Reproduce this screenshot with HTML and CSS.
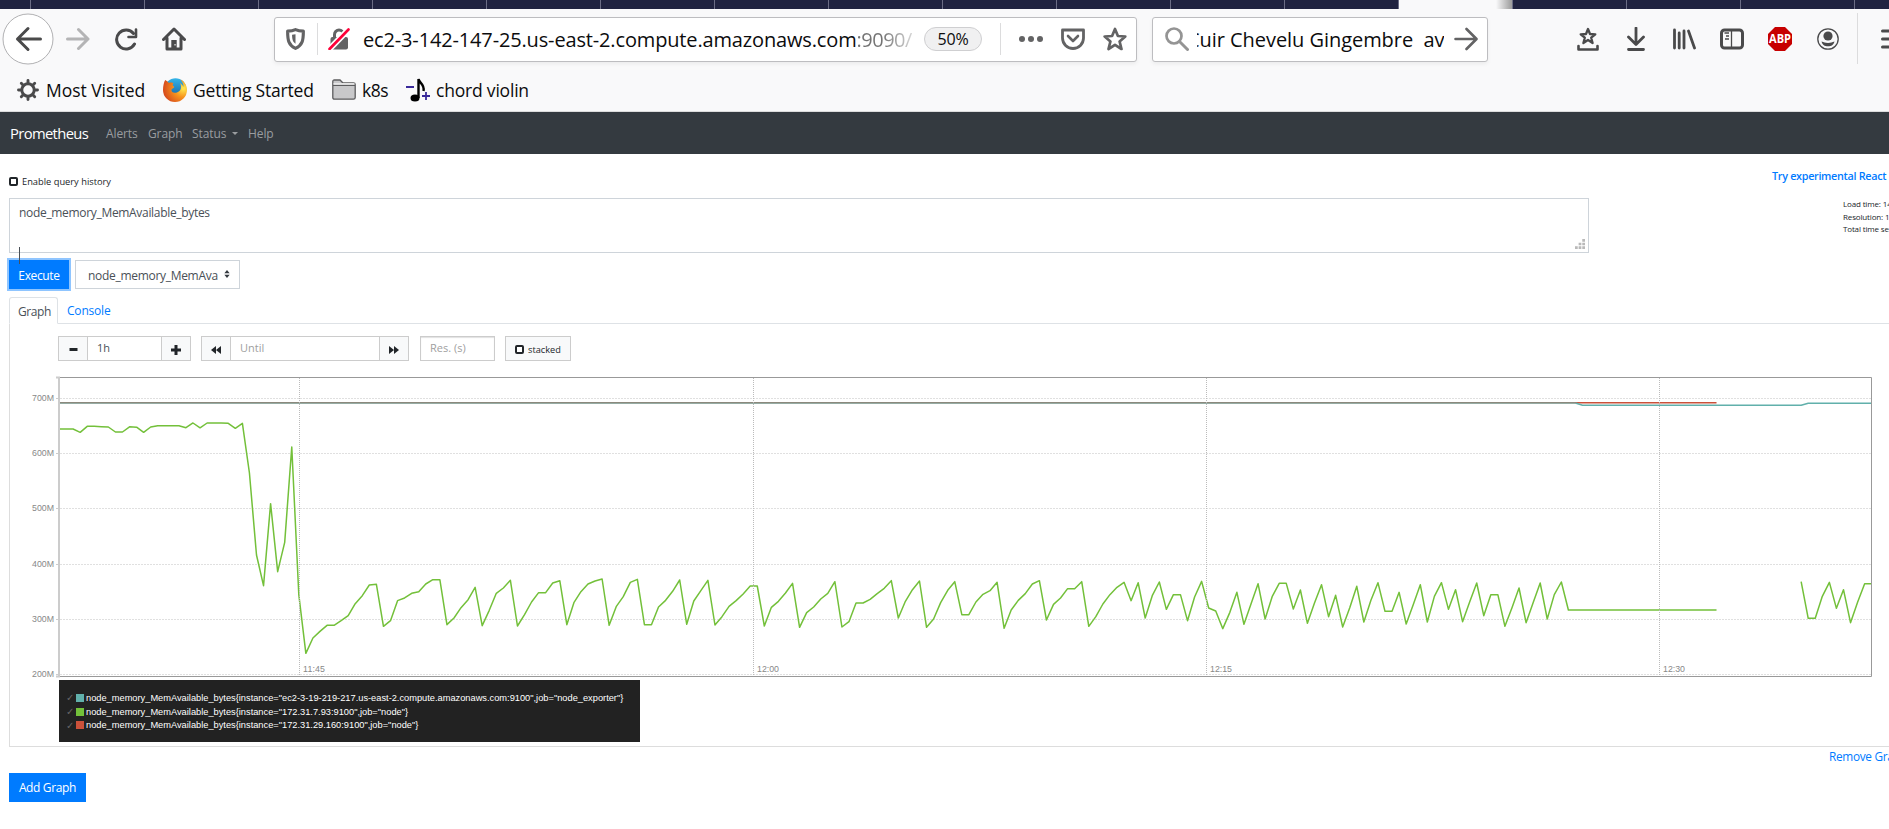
FILE: index.html
```html
<!DOCTYPE html>
<html lang="en">
<head>
<meta charset="utf-8">
<title>Prometheus Time Series Collection and Processing Server</title>
<link rel="stylesheet" href="styles.css">
</head>
<body>
<div class="tabstrip"><div class="tab-active"></div></div>

<div class="toolbar">
  <svg class="ico back" viewBox="0 0 52 52"><circle cx="26" cy="26" r="25" fill="#fff" stroke="#b1b1b3"/><path d="M38.500 26H15.500M26 15.500L15.500 26L26 36.500" fill="none" stroke="#4a4a4b" stroke-width="3" stroke-linecap="round" stroke-linejoin="round"/></svg>
  <svg class="ico fwd" viewBox="0 0 24 24"><path d="M1.500 12H22M12.500 2.500L22 12L12.500 21.500" fill="none" stroke="#b4b4b5" stroke-width="3" stroke-linecap="round" stroke-linejoin="round"/></svg>
  <svg class="ico reload" viewBox="0 0 24 24"><path d="M20.500 17A9.500 9.500 0 1 1 19.500 6.500" fill="none" stroke="#4a4a4b" stroke-width="3" stroke-linecap="round"/><path d="M22 2.500V10H14.500" fill="none" stroke="#4a4a4b" stroke-width="2.600" stroke-linecap="round" stroke-linejoin="round"/></svg>
  <svg class="ico home" viewBox="0 0 24 24"><path d="M1.500 12.500L12 2L22.500 12.500M5 11V22H19V11" fill="none" stroke="#4a4a4b" stroke-width="3" stroke-linecap="round" stroke-linejoin="round"/><path d="M9.300 22V13H14.700V22Z" fill="#4a4a4b"/><rect x="12.300" y="17" width="1.500" height="1.500" fill="#ccc"/></svg>

  <div class="urlbar">
    <svg class="ico shield" viewBox="0 0 18 21"><path d="M9 1.500C11.500 2.700 14 3 16.500 3C16.500 12 15.500 16.500 9 19.500C2.500 16.500 1.500 12 1.500 3C4 3 6.500 2.700 9 1.500Z" fill="none" stroke="#636364" stroke-width="3" stroke-linejoin="round"/><path d="M9 6V15C6.500 13.500 5.800 11 5.700 6.500Z" fill="#636364"/></svg>
    <span class="bar-divider d1"></span>
    <svg class="ico lock" viewBox="0 0 22 22"><path d="M6.500 10V6.500A4.500 4.500 0 0 1 15.500 6.500V10" fill="none" stroke="#636364" stroke-width="3"/><rect x="2.500" y="9" width="17.500" height="12.500" rx="2" fill="#636364"/><path d="M1.500 21L20.500 1.500" stroke="#fff" stroke-width="6"/><path d="M1.500 21L20.500 1.500" stroke="#ff0039" stroke-width="2.600" stroke-linecap="round"/></svg>
    <span class="url">ec2-3-142-147-25.us-east-2.compute.amazonaws.com<span class="port">:9090/</span></span>
    <span class="zoom">50%</span>
    <span class="bar-divider d2"></span>
    <svg class="ico dots" viewBox="0 0 24 24"><g fill="#636364"><circle cx="3" cy="12" r="3"/><circle cx="12" cy="12" r="3"/><circle cx="21" cy="12" r="3"/></g></svg>
    <svg class="ico pocket" viewBox="0 0 24 24"><path d="M1.500 3H22.500V11A10.500 10.500 0 0 1 1.500 11Z" fill="none" stroke="#636364" stroke-width="2.800" stroke-linejoin="round"/><path d="M7 9L12 14L17 9" fill="none" stroke="#636364" stroke-width="2.600" stroke-linecap="round" stroke-linejoin="round"/></svg>
    <svg class="ico star" viewBox="0 0 24 24"><path d="M12 2L14.900 9L22.300 9.500L16.600 14.500L18.500 22L12 17.900L5.500 22L7.400 14.500L1.700 9.500L9.100 9Z" fill="none" stroke="#636364" stroke-width="2.700" stroke-linejoin="round"/></svg>
  </div>

  <div class="searchbar">
    <svg class="ico mag" viewBox="0 0 24 24"><circle cx="9" cy="9" r="7.500" fill="none" stroke="#949494" stroke-width="2.700"/><path d="M14.500 14.500L22.500 22.500" stroke="#949494" stroke-width="3" stroke-linecap="round"/></svg>
    <span class="search-clip"><span class="search-text">Cuir Chevelu Gingembre&nbsp; avis</span></span>
    <svg class="ico go" viewBox="0 0 24 24"><path d="M1.500 12H22M12.500 2L22.500 12L12.500 22" fill="none" stroke="#636364" stroke-width="2.600" stroke-linecap="round" stroke-linejoin="round"/></svg>
  </div>

  <svg class="ico tb first" viewBox="0 0 24 24"><path d="M12 2L14 7L19.300 7.300L15.200 10.700L16.600 16L12 13L7.400 16L8.800 10.700L4.700 7.300L10 7Z" fill="none" stroke="#4a4a4b" stroke-width="2.300" stroke-linejoin="round"/><path d="M2.500 19V22.500H21.500V19" fill="none" stroke="#4a4a4b" stroke-width="2.600" stroke-linecap="round" stroke-linejoin="round"/></svg>
  <svg class="ico tb" viewBox="0 0 24 24"><path d="M12 1V17M4.500 10L12 17.500L19.500 10M4.500 22.500H19.500" fill="none" stroke="#4a4a4b" stroke-width="2.800" stroke-linecap="round" stroke-linejoin="round"/></svg>
  <svg class="ico tb" viewBox="0 0 24 24"><path d="M2.500 3V21M7.200 6V21M12 4V21" fill="none" stroke="#4a4a4b" stroke-width="2.800" stroke-linecap="round"/><path d="M16.500 4L22.500 21" stroke="#4a4a4b" stroke-width="2.800" stroke-linecap="round"/></svg>
  <svg class="ico tb" viewBox="0 0 24 24"><rect x="1.500" y="3" width="21" height="18" rx="3" fill="none" stroke="#4a4a4b" stroke-width="3"/><path d="M11.500 3V21" stroke="#4a4a4b" stroke-width="1.300"/><path d="M4.500 6H9M6 9H9M5 12H9" stroke="#4a4a4b" stroke-width="1.300"/></svg>
  <svg class="ico tb" viewBox="0 0 24 24"><path d="M7 0H17L24 7V17L17 24H7L0 17V7Z" fill="#c70000"/><text x="12" y="16.300" text-anchor="middle" textLength="22" lengthAdjust="spacingAndGlyphs" class="abp">ABP</text></svg>
  <svg class="ico tb" viewBox="0 0 24 24"><circle cx="12" cy="12" r="10.200" fill="none" stroke="#4a4a4b" stroke-width="1.300"/><circle cx="12" cy="9" r="4.600" fill="#4a4a4b"/><path d="M5.500 14.500C8 15 9 16 12 16S16 15 18.500 14.500C17.500 18 15.500 19.300 12 19.300S6.500 18 5.500 14.500Z" fill="#4a4a4b"/></svg>
  <span class="tb-divider"></span>
  <svg class="ico burger" viewBox="0 0 24 24"><path d="M1.500 4H22.500M1.500 12H22.500M1.500 20H22.500" stroke="#4a4a4b" stroke-width="3" stroke-linecap="round"/></svg>
</div>

<div class="bookmarks">
  <svg class="ico gear" viewBox="0 0 22 22"><circle cx="11" cy="11" r="6.200" fill="none" stroke="#4a4a4b" stroke-width="2.900"/><path d="M11 1.500V4M11 18V20.500M1.500 11H4M18 11H20.500M4.300 4.300L6 6M16 16L17.700 17.700M17.700 4.300L16 6M6 16L4.300 17.700" stroke="#4a4a4b" stroke-width="2.900" stroke-linecap="round"/></svg>
  <span class="bm b1">Most Visited</span>
  <svg class="ico fox" viewBox="0 0 24 24"><defs><radialGradient id="g" cx=".85" cy=".4" r=".95"><stop offset=".05" stop-color="#ffe14a"/><stop offset=".4" stop-color="#f7941e"/><stop offset="1" stop-color="#cf3a1c"/></radialGradient><linearGradient id="b" x2="0" y2="1"><stop offset="0" stop-color="#35b5e8"/><stop offset="1" stop-color="#14589c"/></linearGradient></defs><circle cx="12.500" cy="11" r="10.800" fill="url(#b)"/><path d="M2.200 2C4 3 5 4 6 5C8 4 10 5 10.500 5.500C9.500 6.500 9 7.500 11 8.500C12 9.500 9 10.500 8.500 11.500C8 14 10.500 15.500 14 14.500C18 13 19 9 17 5C19 6 20 8 20.500 9C20.700 6 19 3 17.500 1.500C22 3.500 24 8 24 12A12 12 0 0 1 0 12C0 8 1 4 2.200 2Z" fill="url(#g)"/></svg>
  <span class="bm b2">Getting Started</span>
  <svg class="ico folder" viewBox="0 0 24 21"><path d="M.8 18.500V2.500Q.8 1 2.300 1H8L11 4H21.500Q23.200 4 23.200 5.500V18.500Q23.200 20.200 21.500 20.200H2.500Q.8 20.200 .8 18.500Z" fill="#c8c8ca" stroke="#5c5c5e" stroke-width="1.300"/><path d="M1 6.500H23" stroke="#5c5c5e"/><path d="M1.500 4.800H22.500" stroke="#e8e8e8" stroke-width="1.500"/></svg>
  <span class="bm b3">k8s</span>
  <svg class="ico note" viewBox="0 0 24 24"><path d="M0 9H8M16 18H24M20 14V22" stroke="#3a2a9a" stroke-width="1.800"/><ellipse cx="9" cy="20" rx="4.500" ry="3.500"/><path d="M12.500 20V1C13 5 19 6 17.500 13" fill="none" stroke="#000" stroke-width="2.400"/></svg>
  <span class="bm b4">chord violin</span>
</div>

<nav class="navbar">
  <span class="brand">Prometheus</span>
  <span class="nl n1">Alerts</span>
  <span class="nl n2">Graph</span>
  <span class="nl n3">Status<i class="caret"></i></span>
  <span class="nl n4">Help</span>
</nav>

<main class="page">
  <div class="topline">
    <span class="box"></span><span class="hist">Enable query history</span>
    <span class="react">Try experimental React UI</span>
  </div>
  <div class="queryrow">
    <div class="textarea"><span class="query">node_memory_MemAvailable_bytes</span><i class="cursor"></i>
      <svg class="grip" viewBox="0 0 11 11"><path d="M8 0h3v3h-3zM4 4h3v3h-3zM8 4h3v3h-3zM0 8h3v3h-3zM4 8h3v3h-3zM8 8h3v3h-3z" fill="#b9b9b9"/></svg>
    </div>
    <div class="stats"><div>Load time: 14ms</div><div>Resolution: 14s</div><div>Total time series: 3</div></div>
  </div>
  <div class="execrow">
    <div class="btn exec">Execute</div>
    <div class="select"><span>node_memory_MemAva</span><svg class="updown" viewBox="0 0 6 9"><path d="M0 3.700L3 0L6 3.700ZM0 5.300L3 9L6 5.300Z" fill="#343a40"/></svg></div>
  </div>
  <div class="tabs"><div class="tab on">Graph</div><div class="tab off">Console</div></div>
  <section class="panel">
    <div class="controls">
      <div class="group">
        <div class="cb side"><svg width="9" height="9" viewBox="0 0 9 9"><path d="M.5 4.500h8" stroke="#212529" stroke-width="3"/></svg></div>
        <div class="inp dur">1h</div>
        <div class="cb side"><svg width="10" height="10" viewBox="0 0 10 10"><path d="M0 5h10M5 0v10" stroke="#212529" stroke-width="3"/></svg></div>
      </div>
      <div class="group">
        <div class="cb side"><svg width="10" height="8" viewBox="0 0 10 8"><path d="M5 0V8L0 4ZM10 0V8L5 4Z" fill="#212529"/></svg></div>
        <div class="inp until ph">Until</div>
        <div class="cb side"><svg width="10" height="8" viewBox="0 0 10 8"><path d="M0 0V8L5 4ZM5 0V8L10 4Z" fill="#212529"/></svg></div>
      </div>
      <div class="group late"><div class="inp res ph">Res. (s)</div></div>
      <div class="group"><div class="cb stack"><span class="box"></span><span>stacked</span></div></div>
    </div>
    <svg id="chart" class="chart" width="1860" height="312" viewBox="20 370 1860 312"></svg>
    <div class="legend">
      <div class="lrow"><span class="chk">✓</span><i class="sw teal"></i><span class="lt">node_memory_MemAvailable_bytes{instance="ec2-3-19-219-217.us-east-2.compute.amazonaws.com:9100",job="node_exporter"}</span></div>
      <div class="lrow"><span class="chk">✓</span><i class="sw green"></i><span class="lt">node_memory_MemAvailable_bytes{instance="172.31.7.93:9100",job="node"}</span></div>
      <div class="lrow"><span class="chk">✓</span><i class="sw red"></i><span class="lt">node_memory_MemAvailable_bytes{instance="172.31.29.160:9100",job="node"}</span></div>
    </div>
  </section>
  <div class="remove">Remove Graph</div>
  <div class="btn add">Add Graph</div>
</main>
<script src="chart.js"></script>
</body>
</html>
```
FILE: styles.css
```css
* { box-sizing: border-box; }
body { margin: 0; width: 1889px; height: 829px; overflow: hidden; background: #fff; font-family: "Open Sans", "Noto Sans", sans-serif; color: #212529; white-space: nowrap; }
svg { display: block; flex: none; }
span, div, i { flex: none; }

.tabstrip { height: 9px; display: flex; padding-left: 1399px; background: #202340 linear-gradient(90deg, #6b6d85 1px, #202340 1px) 30px 0 / 114px 9px; }
.tab-active { width: 113px; height: 9px; background: linear-gradient(90deg, #f9f9fa 97px, #a0a0a0 112px); }

.toolbar { height: 56px; background: #f9f9fa; display: flex; align-items: center; padding-left: 2px; }
.toolbar .ico { width: 24px; height: 24px; }
.toolbar .back { width: 52px; height: 52px; margin-top: 3px; }
.toolbar .fwd { margin: 4px 0 0 12px; }
.toolbar .reload { margin: 4px 0 0 24px; }
.toolbar .home { margin: 4px 0 0 24px; }
.urlbar, .searchbar { height: 45px; margin-top: 4px; background: #fff; border: 1px solid #bdbdc0; border-radius: 3px; display: flex; align-items: center; box-shadow: 0 2px 4px rgba(0,0,0,.06); }
.urlbar { width: 863px; margin-left: 88px; padding-left: 11px; }
.toolbar .shield { width: 19px; height: 22px; }
.bar-divider { width: 1px; height: 32px; background: #dcdcdd; }
.d1 { margin-left: 12px; }
.toolbar .lock { width: 22px; height: 22px; margin-left: 10px; }
.url { margin-left: 13px; width: 556px; overflow: hidden; font-size: 20px; letter-spacing: -.15px; line-height: 30px; padding-top: 1px; color: #0c0c0d; }
.port { letter-spacing: -.5px; background: linear-gradient(90deg, #737373 25px, #d8d8d8 56px); -webkit-background-clip: text; background-clip: text; color: transparent; }
.zoom { width: 58px; height: 24px; margin-left: 5px; border: 1px solid #cfcfd1; border-radius: 12px; background: #f0f0f1; text-align: center; font-size: 16px; letter-spacing: -.2px; line-height: 23px; color: #0c0c0d; }
.d2 { margin-left: 18px; }
.dots { margin-left: 18px; }
.pocket { margin-left: 18px; }
.star { margin-left: 18px; }
.searchbar { width: 336px; margin-left: 15px; padding-left: 12px; }
.search-clip { width: 247px; margin-left: 8px; overflow: hidden; font-size: 20px; letter-spacing: -.05px; line-height: 30px; padding-top: 1px; color: #0c0c0d; }
.search-text { margin-left: -10px; }
.go { margin-left: 10px; }
.tb { margin: 4px 0 0 24px; }
.toolbar .first { margin-left: 88px; }
.abp { font: 700 11.500px "Open Sans", sans-serif; fill: #fff; }
.tb-divider { width: 1px; height: 51px; margin: 2px 0 0 17px; background: #dcdcdd; }
.burger { margin: 4px 0 0 23px; }

.bookmarks { height: 47px; background: #f9f9fa; border-bottom: 1px solid #dcdcdd; display: flex; align-items: center; padding: 3px 0 0 17px; font-size: 17.500px; color: #0c0c0d; }
.gear { width: 22px; height: 22px; }
.bm { line-height: 26px; }
.b1 { width: 124px; padding-left: 7px; letter-spacing: -.05px; }
.fox { width: 24px; height: 24px; }
.b2 { width: 145px; padding-left: 6px; letter-spacing: -.2px; }
.folder { width: 24px; height: 21px; }
.b3 { width: 50px; padding-left: 6px; letter-spacing: -.5px; }
.note { width: 24px; height: 24px; }
.b4 { padding-left: 6px; letter-spacing: -.2px; }

.navbar { height: 42px; background: #343a40; display: flex; align-items: center; padding-left: 10px; font-size: 12px; letter-spacing: -.1px; color: #9a9da0; }
.brand { width: 96px; font-size: 14.800px; letter-spacing: -.65px; color: #fff; }
.n1 { width: 42px; }
.n2 { width: 44px; }
.n3 { width: 56px; display: flex; align-items: center; }
.caret { margin-left: 6px; border: 3px solid transparent; border-top-color: #9a9da0; border-bottom: 0; }

.page { padding: 21px 0 0 9px; }
.topline { display: flex; align-items: center; padding-bottom: 10px; height: 23px; }
.box { width: 9px; height: 9px; border: 2px solid #212529; border-radius: 2px; background: #fff; }
.hist { margin-left: 4px; width: 1750px; font-size: 9.300px; }
.react { font-size: 10.800px; letter-spacing: -.3px; color: #007bff; font-weight: 600; margin-top: -12px; }
.queryrow { display: flex; }
.textarea { position: relative; width: 1580px; height: 55px; border: 1px solid #ced4da; padding: 5px 9px; font-size: 12px; letter-spacing: -.32px; line-height: 17px; color: #495057; }
.cursor { position: absolute; left: 9px; top: 48px; width: 1px; height: 17px; background: #495057; z-index: 3; }
.grip { position: absolute; right: 3px; bottom: 2px; width: 10px; height: 12px; }
.stats { margin: 0 0 0 254px; font-size: 8px; letter-spacing: -.15px; line-height: 12.500px; }
.execrow { display: flex; align-items: center; margin-top: 7px; }
.btn { background: #007bff; color: #fff; font-size: 12px; letter-spacing: -.35px; display: flex; justify-content: center; align-items: center; height: 29px; }
.exec { width: 60px; padding-top: 2px; box-shadow: 0 0 0 2px #8fc5ff; }
.select { margin-left: 6px; width: 165px; height: 29px; border: 1px solid #ced4da; display: flex; align-items: center; padding: 2px 0 0 12px; font-size: 12px; letter-spacing: -.3px; color: #495057; }
.updown { width: 6px; height: 8px; margin: -3px 0 0 6px; }
.tabs { display: flex; height: 27px; margin-top: 8px; border-bottom: 1px solid #dee2e6; font-size: 12px; letter-spacing: -.4px; }
.tab { height: 27px; line-height: 28px; }
.on { width: 49px; border: 1px solid #dee2e6; border-bottom-color: #fff; border-radius: 3px 3px 0 0; padding-left: 8px; color: #495057; background: #fff; line-height: 27px; }
.off { padding-left: 9px; color: #007bff; letter-spacing: -.2px; }
.panel { height: 423px; border: 1px solid #ddd; border-width: 0 0 1px 1px; padding-top: 12px; }
.controls { display: flex; padding-left: 48px; gap: 10px; height: 25px; }
.group { display: flex; border: 1px solid #ccc; font-size: 11px; }
.late { margin-left: 1px; }
.cb { background: #f8f9fa; display: flex; align-items: center; justify-content: center; }
.side { width: 28px; padding-top: 2px; }
.inp { height: 23px; line-height: 21px; padding-left: 9px; border: 0 solid #ccc; border-width: 0 1px; color: #495057; }
.ph { color: #a0a0a0; }
.dur { width: 75px; }
.until { width: 150px; }
.res { width: 73px; border: 0; box-shadow: inset 0 1px 1px rgba(0,0,0,.12); }
.stack { width: 64px; gap: 4px; font-size: 9.200px; padding-top: 2px; }
.chart { margin: 9px 0 0 10px; overflow: visible; }
.axis { font: 8.800px "Liberation Sans", Arial, sans-serif; fill: #888; }
.legend { width: 581px; height: 62px; margin: -2px 0 0 49px; background: #222; padding: 11px 0 0 7px; font: 9.270px "Liberation Sans", Arial, sans-serif; color: #fff; }
.lrow { height: 13.700px; display: flex; align-items: center; }
.chk { width: 10px; color: #666; font: 10px "DejaVu Sans", sans-serif; }
.sw { width: 8px; height: 8px; margin-right: 2px; }
.teal { background: #61b0ab; }
.green { background: #73c03a; }
.red { background: #cb513a; }
.remove { margin: 1px 0 0 1820px; font-size: 11.800px; letter-spacing: -.3px; line-height: 17px; color: #007bff; }
.add { width: 77px; margin-top: 8px; }
```
FILE: chart.js
```javascript
// Samples are offsets in thirds of a pixel below the top of the chart, one every 14 seconds.
const STEP = 21.16;
const node7 = [
  178,178,178,188,170,170,171,172,187,187,171.5,172.5,188,172,168,168,168,168,174,160,174.5,160,160,160,161,176,161,
  310,556,648,402,606,518,232,675,851,805,785,767,767,753,738,702,678,646,644,770,753,693,685,671,666,643,630,630,765,
  745,714,690,653,768,722,671,655,632,769,735,697,669,669,640,633,765,699,666,643,634,628,767,711,681,638,629,765,765,
  712,692,665,631,764,694,663,632,766,741,710,693,673,649,649,769,713,695,670,641,773,729,712,688,671,636,772,756,700,
  700,689,672,656,633,745,695,660,634,773,748,699,662,636,735,735,697,674,663,638,776,721,692,672,643,633,751,704,685,
  657,657,636,770,741,703,675,653,638,693,639,745,678,637,719,675,675,753,682,635,715,724,777,728,668,764,703,642,748,
  681,641,641,718,661,761,700,645,741,677,772,714,650,757,692,639,725,725,668,763,705,645,757,680,639,719,660,756,697,
  640,738,675,675,770,714,655,759,699,640,748,675,637,721
];
const node7Late = [636,746,746,680,638,716,660,759,698,642,642];

const line = (pts, color, opacity = 1) =>
  `<polyline points="${pts.map(p => p.join(",")).join(" ")}" fill="none" stroke="${color}" stroke-opacity="${opacity}" stroke-width="4.5" stroke-linejoin="round"/>`;
const series = (vals, start) => vals.map((v, i) => [((start + i) * STEP).toFixed(1), v - 1]);
const X = i => i * STEP;

let out = "";
["700M", "600M", "500M", "400M", "300M", "200M"].forEach((t, i) => {
  const y = Math.round(398 + i * 55.2) + 0.5;
  out += `<path d="M56 ${y}H60" stroke="#ccc"/><path d="M60 ${y}H1871" stroke="#e0e0e0" stroke-dasharray="2 1"/>`;
  out += `<text class="axis" x="54" y="${y + 2.5}" text-anchor="end" textLength="22">${t}</text>`;
});
out += '<g transform="translate(59 370) scale(.33333)">';
out += line([[0, 98.5], [X(214), 98.5], [X(235), 98.5]], "#cb513a");
out += line(series(node7, 0).concat([[X(235), 720]]), "#73c03a");
out += line(series(node7Late, 247), "#73c03a");
out += line([[0, 99], [X(215), 99]], "#61b0ab", 0.8);
out += line([[X(215), 99], [X(216), 106], [X(247), 106], [X(248), 100], [X(257), 100]], "#61b0ab");
out += "</g>";
[["11:45", 299.5], ["12:00", 753.5], ["12:15", 1206.5], ["12:30", 1659.5]].forEach(([t, x]) => {
  out += `<path d="M${x} 378V676" stroke="#bbb" stroke-dasharray="1 1"/>`;
  out += `<text class="axis" x="${x + 3.5}" y="671.5" textLength="22">${t}</text>`;
});
out += '<path d="M59 377.500H1871.500V676.500H59" fill="none" stroke="#999"/><path d="M56 377.500H59V676.500H56" fill="none" stroke="#ccc" stroke-width="2"/>';
document.getElementById("chart").innerHTML = out;
```
